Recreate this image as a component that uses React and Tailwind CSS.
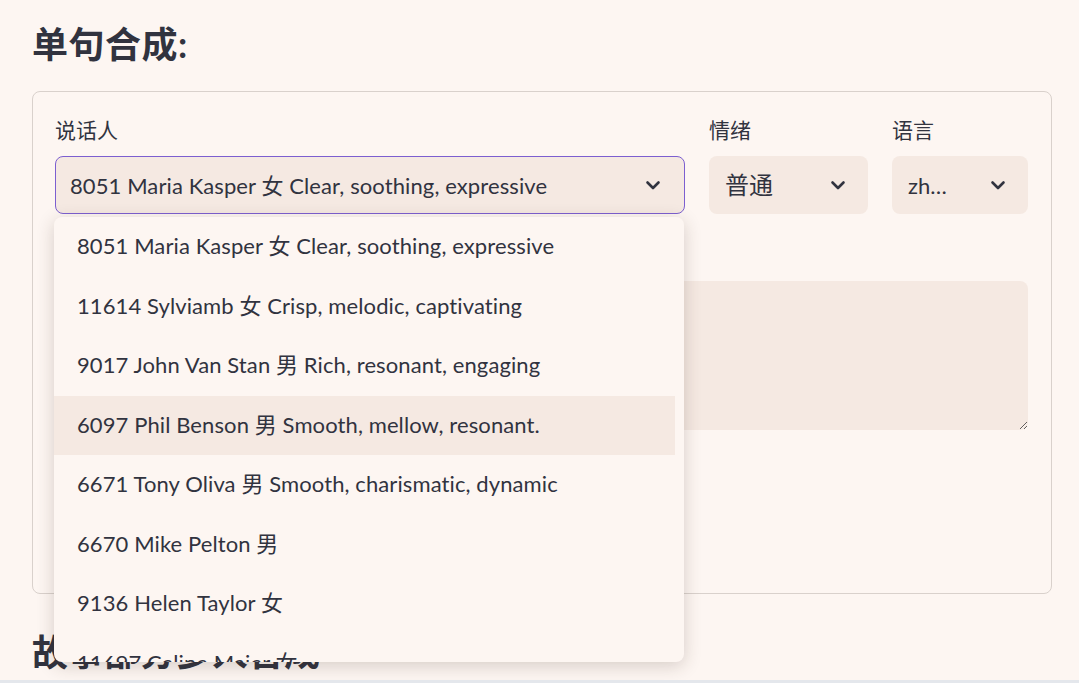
import { useState } from 'react';

const speakers = [
  '8051 Maria Kasper 女 Clear, soothing, expressive',
  '11614 Sylviamb 女 Crisp, melodic, captivating',
  '9017 John Van Stan 男 Rich, resonant, engaging',
  '6097 Phil Benson 男 Smooth, mellow, resonant.',
  '6671 Tony Oliva 男 Smooth, charismatic, dynamic',
  '6670 Mike Pelton 男',
  '9136 Helen Taylor 女',
  '11697 Celine Maier 女',
];

const font = { fontFamily: 'Lato, "Noto Sans CJK SC", sans-serif' };

function Chevron() {
  return (
    <svg width="18" height="18" viewBox="0 0 18 18" fill="none" className="shrink-0">
      <path d="M3.5 6.5 L9 12 L14.5 6.5" stroke="#31333f" strokeWidth="2.6" strokeLinecap="round" strokeLinejoin="round" />
    </svg>
  );
}

export default function App() {
  const [hovered] = useState(3);

  return (
    <div className="h-[683px] overflow-hidden flex flex-col bg-[#fdf6f2] text-[#31333f]" style={font}>
      <div className="flex-1 overflow-hidden px-8 pt-[22px]">
        {/* 单句合成 */}
        <h1 className="text-[36px] leading-[44px] font-bold mb-[25px] tracking-[0.5px]">单句合成:</h1>

        <div className="border border-[#d9d1cc] rounded-lg w-[1020px] h-[503px] px-[22px] pt-[24px]">
          <div className="grid grid-cols-[630px_159px_136px] gap-x-6">
            {/* 说话人 */}
            <div className="relative">
              <div className="text-[21px] leading-[28px] mb-[12px]">说话人</div>
              <div className="h-[58px] rounded-lg border border-[#7c5fd0] bg-[#f5e9e2] flex items-center justify-between pl-[14px] pr-[22px]">
                <span className="text-[22px] tracking-[0.1px]">{speakers[0]}</span>
                <Chevron />
              </div>

              {/* dropdown list */}
              <div className="absolute left-[-1px] top-[101px] z-10 w-[630px] h-[445px] overflow-hidden rounded-lg bg-[#fdf6f2] shadow-[0_4px_18px_rgba(60,40,30,0.2)]">
                {speakers.map((s, i) => (
                  <div
                    key={s}
                    className={
                      'w-[621px] h-[59.5px] flex items-center pl-[23px] pb-[2px] text-[22px] tracking-[0.1px] ' +
                      (i === hovered ? 'bg-[#f5e9e2]' : '')
                    }
                  >
                    {s}
                  </div>
                ))}
              </div>
            </div>

            {/* 情绪 */}
            <div>
              <div className="text-[21px] leading-[28px] mb-[12px]">情绪</div>
              <div className="h-[58px] rounded-lg bg-[#f5e9e2] flex items-center justify-between pl-4 pr-[21px]">
                <span className="text-[24px]">普通</span>
                <Chevron />
              </div>
            </div>

            {/* 语言 */}
            <div>
              <div className="text-[21px] leading-[28px] mb-[12px]">语言</div>
              <div className="h-[58px] rounded-lg bg-[#f5e9e2] flex items-center justify-between pl-4 pr-[21px]">
                <span className="text-[22px]">zh…</span>
                <Chevron />
              </div>
            </div>
          </div>

          <div className="mt-[67px]">
            <textarea className="block w-[973px] h-[149px] rounded-lg bg-[#f5e9e2] outline-none resize-y" />
          </div>
        </div>

        <h1 className="text-[36px] leading-[44px] font-bold mt-[36px]">故事部分多人合成</h1>
      </div>
      <div className="h-[3px] bg-[#e4e7ec]" />
    </div>
  );
}
